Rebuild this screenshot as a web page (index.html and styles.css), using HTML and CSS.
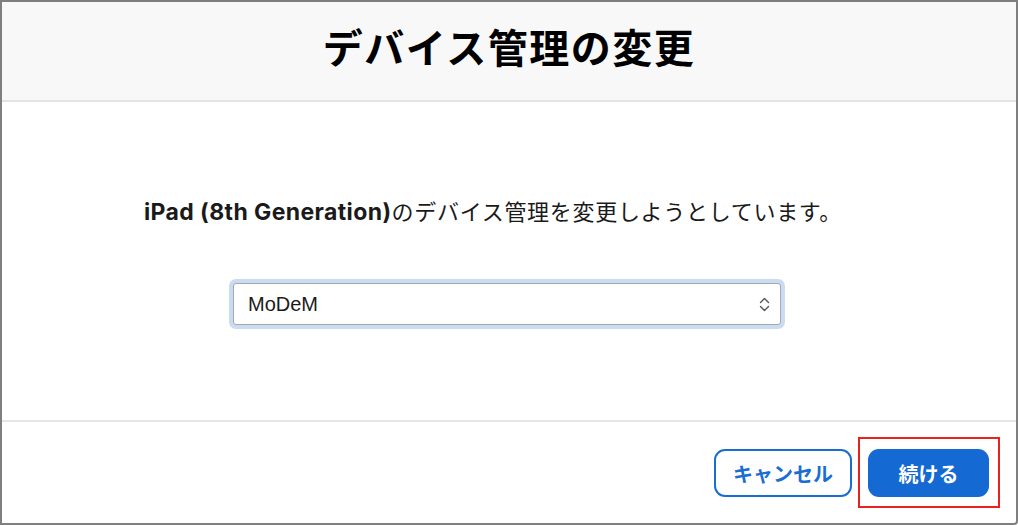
FILE: index.html
```html
<!DOCTYPE html>
<html lang="ja">
<head>
<meta charset="utf-8">
<title>デバイス管理の変更</title>
<link rel="stylesheet" href="styles.css">
</head>
<body>
<div class="dialog">
  <header class="dialog-header">
    <h1 class="dialog-title">デバイス管理の変更</h1>
  </header>
  <main class="dialog-body">
    <p class="message"><b class="device">iPad (8th Generation)</b>のデバイス管理を変更しようとしています。</p>
    <div class="select">
      <span class="select-value">MoDeM</span>
      <svg class="select-arrows" width="11" height="17" viewBox="0 0 11 17" fill="none" stroke="#555" stroke-width="1.4" stroke-linecap="round" stroke-linejoin="round">
        <path d="M1.5 6.5 L5.5 2.5 L9.5 6.5"/>
        <path d="M1.5 10.5 L5.5 14.5 L9.5 10.5"/>
      </svg>
    </div>
  </main>
  <footer class="dialog-footer">
    <button class="btn btn-secondary">キャンセル</button>
    <button class="btn btn-primary">続ける</button>
  </footer>
</div>
</body>
</html>
```
FILE: styles.css
```css
html, body {
  margin: 0;
  padding: 0;
  background: #ffffff;
}
body {
  font-family: Inter, "Noto Sans CJK JP", sans-serif;
}
.dialog {
  box-sizing: border-box;
  width: 1018px;
  height: 525px;
  border: 2px solid #7f7f7f;
  border-bottom-right-radius: 4px;
  display: flex;
  flex-direction: column;
  background: #fff;
}
.dialog-header {
  height: 98px;
  background: #f8f8f8;
  border-bottom: 2px solid #e3e3e3;
  display: flex;
  align-items: center;
  justify-content: center;
}
.dialog-title {
  margin: 0;
  margin-top: -10px;
  font-family: "Noto Sans CJK JP", sans-serif;
  font-weight: 700;
  font-size: 40px;
  letter-spacing: 1.5px;
  color: #000;
}
.dialog-body {
  height: 318px;
  display: flex;
  flex-direction: column;
  align-items: center;
}
.message {
  box-sizing: border-box;
  height: 30px;
  margin: 93px 0 0 0;
  padding-right: 32px;
  font-family: "Noto Sans CJK JP", sans-serif;
  font-size: 22px;
  letter-spacing: 0.7px;
  color: #1a1a1a;
  line-height: 30px;
  white-space: nowrap;
}
.device {
  font-family: Inter, "Noto Sans CJK JP", sans-serif;
  font-weight: 700;
  font-size: 23px;
  letter-spacing: 0.4px;
}
.select {
  box-sizing: border-box;
  margin: 58px 4px 0 0;
  width: 548px;
  height: 42px;
  border: 1px solid #a9a9a9;
  border-radius: 3px;
  box-shadow: 0 0 0 4px #c9dcf3;
  display: flex;
  align-items: center;
  justify-content: space-between;
  padding: 0 10px 0 14px;
  background: #fff;
}
.select-value {
  font-family: "Liberation Sans", Arial, sans-serif;
  font-size: 20px;
  color: #1a1a1a;
}
.dialog-footer {
  flex: 1;
  border-top: 2px solid #e6e6e6;
  display: flex;
  justify-content: flex-end;
  align-items: flex-start;
  gap: 16px;
  padding: 27px 27px 0 0;
}
.btn {
  box-sizing: border-box;
  height: 48px;
  border-radius: 11px;
  font-family: "Noto Sans CJK JP", sans-serif;
  font-weight: 700;
  font-size: 20px;
  cursor: pointer;
}
.btn-secondary {
  width: 138px;
  background: #fff;
  border: 2px solid #1a6dd2;
  color: #1a6dd2;
}
.btn-primary {
  position: relative;
  width: 121px;
  background: #1469d3;
  border: none;
  color: #fff;
}
.btn-primary::after {
  content: "";
  position: absolute;
  left: -10px;
  right: -11px;
  top: -12px;
  bottom: -11px;
  border: 2px solid #e8231e;
  pointer-events: none;
}
```
